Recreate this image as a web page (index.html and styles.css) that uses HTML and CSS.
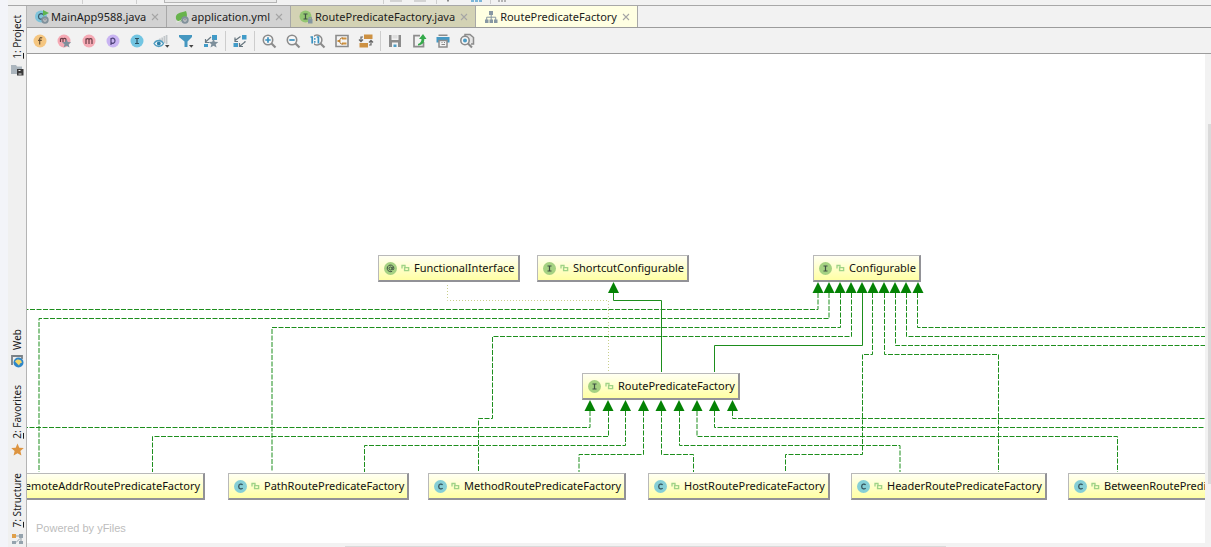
FILE: index.html
```html
<!DOCTYPE html>
<html lang="en">
<head>
<meta charset="utf-8">
<title>RoutePredicateFactory</title>
<link rel="stylesheet" href="styles.css">
</head>
<body>
<svg class="defs" aria-hidden="true">
  <symbol id="i-interface" viewBox="0 0 13 13"><circle cx="6.500" cy="6.500" r="6.500" fill="#a5d182"/><path d="M4.500 4h4M4.500 9h4M6.500 4v5" stroke="#3f5142" stroke-width="1.200" fill="none"/></symbol>
  <symbol id="i-class" viewBox="0 0 13 13"><circle cx="6.500" cy="6.500" r="6.500" fill="#85cfd6"/><path d="M8.600 4.800C7.600 3.600 4.700 3.700 4.700 6.500s2.900 2.900 3.900 1.700" stroke="#35545c" stroke-width="1.300" fill="none"/></symbol>
  <symbol id="i-annotation" viewBox="0 0 13 13"><circle cx="6.500" cy="6.500" r="6.500" fill="#a5d182"/><path d="M8.200 9.200A3.300 3.300 0 1 1 9.800 6.500c0 1.700-1.600 1.600-1.600.3V5M8 6.500a1.500 1.500 0 1 1-3 0a1.500 1.500 0 0 1 3 0" stroke="#3f5142" stroke-width="1" fill="none"/></symbol>
  <symbol id="i-lock" viewBox="0 0 9 8"><path d="M1 4.500V1.500h3V4" stroke="#9fd387" stroke-width="1.300" fill="none"/><path d="M3.600 3.600h4v3h-4z" stroke="#9fd387" stroke-width="1.400" fill="none"/></symbol>
  <symbol id="i-close" viewBox="0 0 8 8"><path d="M1 1l6 6M7 1L1 7" stroke="#a5a5a5" stroke-width="1.100"/></symbol>
</svg>

<div class="app">
  <div class="edge"></div>
  <div class="window">
    <div class="topbar">
      <i class="tick first"></i><i class="tick"></i><i class="combo"></i>
      <svg class="fragments" width="130" height="5" viewBox="0 0 130 5"><path d="M7 1h12M31 1h12" stroke="#b5b5b5"/><path d="M65 0v1.500" stroke="#8a8a8a" stroke-width="2"/><path d="M88 1h11" stroke="#55a3cf" stroke-width="1.500" stroke-dasharray="3 1"/><path d="M115 1h9" stroke="#777" stroke-dasharray="2 1"/><path d="M.500 0v4M53.500 0v4M107.500 0v4" stroke="#cfcfcf"/></svg>
    </div>
    <div class="body">
      <nav class="sidebar" aria-label="Tool windows">
        <button class="tool"><span class="tool-label"><u>1</u>: Project</span>
          <svg width="13" height="12" viewBox="0 0 13 12"><path d="M0 1h5l1 1.500h5V10H0z" fill="#abb5bd"/><path d="M6 5h6.500v6.500H6z" fill="#3b3b3b"/><path d="M7.500 6.500h2M7.500 10h3" stroke="#eee"/></svg></button>
        <button class="tool push"><span class="tool-label">Web</span>
          <svg width="13" height="13" viewBox="0 0 13 13"><path d="M1 10V1h10v3" fill="none" stroke="#7b8287" stroke-width="1.800"/><circle cx="7.500" cy="7.500" r="5" fill="#2e86c8"/><path d="M4 6.500c2-3 4-2 6-1l1 2-2 1-1 2-2-2z" fill="#f3d768"/></svg></button>
        <button class="tool"><span class="tool-label"><u>2</u>: Favorites</span>
          <svg width="13" height="13" viewBox="0 0 13 13"><path d="M6.500.500l1.800 4.200 4.500.4-3.400 3 1 4.400-3.900-2.300-3.900 2.300 1-4.400-3.400-3 4.500-.4z" fill="#dd9440"/></svg></button>
        <button class="tool"><span class="tool-label"><u>7</u>: Structure</span>
          <svg width="13" height="12" viewBox="0 0 13 12"><path d="M1 1h4v4H1z" fill="#e0a04a"/><path d="M8 1h4v4H8zM1 8h4v3H1zM8 8h4v3H8z" fill="#95a3ad"/><path d="M5 3h3M10 5v3M5 9.500l4-4" stroke="#95a3ad"/></svg></button>
      </nav>

      <main class="editor">
        <div class="tabs" role="tablist">
          <div class="tab"><svg width="15" height="14" viewBox="0 0 15 14"><circle cx="6" cy="6.500" r="6" fill="#7fc4da"/><path d="M8 4.500C6.500 3 3.500 3.500 3.500 6.500S6 9.500 7 8.800" stroke="#39596a" stroke-width="1.200" fill="none"/><path d="M8 0l6 3-6 3z" fill="#5fb550"/><circle cx="10" cy="10" r="2.700" stroke="#81919b" stroke-width="2" fill="#d2d2d2"/><path d="M10 8.500v2" stroke="#667"/></svg><span>MainApp9588.java</span><button aria-label="Close MainApp9588.java"><svg width="8" height="8"><use href="#i-close"/></svg></button></div>
          <div class="tab"><svg width="15" height="14" viewBox="0 0 15 14"><path d="M1 9C0 3 5 3 11 1c2 5 1 9-4 10-3 .5-5 0-6-2z" fill="#68b34d"/><path d="M1 12c3 0 6-2 8-5" stroke="#e8f3e0" stroke-width=".8" fill="none"/><circle cx="10" cy="10" r="2.700" stroke="#81919b" stroke-width="2" fill="#d2d2d2"/><path d="M10 8.500v2" stroke="#667"/></svg><span>application.yml</span><button aria-label="Close application.yml"><svg width="8" height="8"><use href="#i-close"/></svg></button></div>
          <div class="tab library"><svg width="15" height="14" viewBox="0 0 15 14"><circle cx="6.500" cy="6.500" r="6" fill="#93c672"/><path d="M4.500 4h4M4.500 9h4M6.500 4v5" stroke="#3f5142" stroke-width="1.200"/><path d="M9 9h4.500v4.500H9z" fill="#8496a1"/><path d="M10 9V7.500h2.500V9" stroke="#8496a1" fill="none"/></svg><span>RoutePredicateFactory.java</span><button aria-label="Close RoutePredicateFactory.java"><svg width="8" height="8"><use href="#i-close"/></svg></button></div>
          <div class="tab active"><svg width="15" height="14" viewBox="0 0 15 14"><path d="M5 1h4v4H5zM1 9.500h3.500V13H1zM5.500 9.500h3.500V13H5.500zM10 9.500h3.500V13H10z" fill="#8797a3"/><path d="M7.200 4v6M2.700 10V7.200h9V10" stroke="#8797a3" fill="none"/></svg><span>RoutePredicateFactory</span><button aria-label="Close RoutePredicateFactory"><svg width="8" height="8"><use href="#i-close"/></svg></button></div>
        </div>

        <div class="toolbar" role="toolbar">
          <div class="group">
            <button aria-label="Fields"><svg width="16" height="16" viewBox="0 0 16 16"><circle cx="8" cy="8" r="6.500" fill="#f5c680"/><path d="M10.200 5C8.500 4 7.700 4.800 7.700 6v5.500M6 7.300h3.800" stroke="#6b5334" stroke-width="1.200" fill="none"/></svg></button>
            <button class="wide" aria-label="Constructors"><svg width="17" height="16" viewBox="0 0 17 16"><circle cx="8" cy="8" r="6.500" fill="#f5a9b4"/><path d="M4.500 9V5.500M4.500 6c1-1 2.500-1 2.500.5V9M7 6c1-1 3-1 3 .5V9" stroke="#6c3f48" stroke-width="1.200" fill="none"/><path d="M10.500 6l1.300 3 3.400.2-2.600 2.100.9 3.300-3-1.900-2.900 1.900.9-3.300-2.600-2.100 3.300-.2z" fill="#7d8f9b"/></svg></button>
            <button aria-label="Methods"><svg width="16" height="16" viewBox="0 0 16 16"><circle cx="8" cy="8" r="6.500" fill="#f5a9b4"/><path d="M5 11V5.500M5 6.500c1-1.200 3-1.200 3 .5v4M8 6.500c1-1.200 3-1.200 3 .5v4" stroke="#6c3f48" stroke-width="1.200" fill="none"/></svg></button>
            <button aria-label="Properties"><svg width="16" height="16" viewBox="0 0 16 16"><circle cx="8" cy="8" r="6.500" fill="#c9b4f2"/><path d="M6 12V5M6 6c1.500-1.500 4-.8 4 1.700S7.500 11 6 9.500" stroke="#50447a" stroke-width="1.200" fill="none"/></svg></button>
            <button aria-label="Inner classes"><svg width="16" height="16" viewBox="0 0 16 16"><circle cx="8" cy="8" r="6.500" fill="#72c5e2"/><path d="M6 5.500h4M6 10.500h4M8 5.500v5" stroke="#2c5262" stroke-width="1.200"/></svg></button>
            <button class="wide" aria-label="Visibility level"><svg width="17" height="16" viewBox="0 0 17 16"><path d="M7 5.500v2M9.200 4.500v4M11.400 3v7M13.600 2v9" stroke="#c2c7ca" stroke-width="1.700"/><path d="M1 10.500c2.500-4 7-4 9.500 0-2.500 4-7 4-9.500 0z" fill="#eef5f8" stroke="#4f9cc0" stroke-width="1.300"/><circle cx="5.800" cy="10.500" r="1.900" fill="#2d7ea8"/><path d="M12 12h4.500l-2.200 2.800z" fill="#444"/></svg></button>
            <button class="wide" aria-label="Filter"><svg width="17" height="16" viewBox="0 0 17 16"><path d="M1 2h13v2L9.500 8.500V14h-3V8.500L1 4z" fill="#4597c0"/><path d="M11 12h4.500l-2.200 2.800z" fill="#444"/></svg></button>
            <button aria-label="Show neighbours"><svg width="16" height="16" viewBox="0 0 16 16"><path d="M9 2h5v5H9z" fill="#419bc8"/><path d="M1 11h4v3H1z" fill="#419bc8"/><path d="M8 4L2.500 9M2.500 6v3.500H6" stroke="#6b7a83" stroke-width="1.200" fill="none"/><path d="M10.500 5.500l1.300 3.200 3.500.3-2.600 2.200.9 3.400-3.100-1.900-3 1.900.9-3.400-2.700-2.200 3.500-.3z" fill="#7d8f9b"/></svg></button>
          </div>
          <i class="sep"></i>
          <div class="group">
            <button aria-label="Route edges"><svg width="16" height="16" viewBox="0 0 16 16"><path d="M10 2h4.500v4.500H10zM1.500 10H6v4H1.500z" fill="#419bc8"/><path d="M8.500 3.500l-5.500 4M3 4.500v4h3M13 8v1l-5 4M7.500 10v3.500H11" stroke="#66757e" stroke-width="1.200" fill="none"/></svg></button>
          </div>
          <i class="sep"></i>
          <div class="group">
            <button aria-label="Zoom in"><svg width="16" height="16" viewBox="0 0 16 16"><circle cx="7" cy="7" r="4.700" stroke="#8b8b8b" stroke-width="1.600" fill="#f7f7f7"/><path d="M10.500 10.500l4 4" stroke="#8b8b8b" stroke-width="2.200"/><path d="M4.300 7h5.400M7 4.300v5.400" stroke="#3c92c0" stroke-width="1.700"/></svg></button>
            <button aria-label="Zoom out"><svg width="16" height="16" viewBox="0 0 16 16"><circle cx="7" cy="7" r="4.700" stroke="#8b8b8b" stroke-width="1.600" fill="#f7f7f7"/><path d="M10.500 10.500l4 4" stroke="#8b8b8b" stroke-width="2.200"/><path d="M4.300 7h5.400" stroke="#3c92c0" stroke-width="1.700"/></svg></button>
            <button class="wide" aria-label="Actual size"><svg width="17" height="16" viewBox="0 0 17 16"><circle cx="8" cy="7" r="4.900" stroke="#8b8b8b" stroke-width="1.500" fill="#f7f7f7"/><path d="M1 2h4v10H1z" fill="#f2f2f2"/><path d="M11.500 10.500l4 4" stroke="#8b8b8b" stroke-width="2.200"/><path d="M1.500 4h1.700v6.500M7.700 4h1.700v6.500" stroke="#3c92c0" stroke-width="1.700" fill="none"/><path d="M5.800 5v1.700M5.800 8v1.700" stroke="#3c92c0" stroke-width="1.400"/></svg></button>
            <button aria-label="Fit content"><svg width="16" height="16" viewBox="0 0 16 16"><path d="M2 2.500h12v11H2z" stroke="#8b8b8b" stroke-width="1.600" fill="#f4f4f4"/><path d="M8 5.500h4.500M8 10.500h4.500M3.500 8h3" stroke="#d0923f" stroke-width="2"/><path d="M9 5H7L5 8l2 3h2" stroke="#b07a35" fill="none"/></svg></button>
            <button aria-label="Apply layout"><svg width="16" height="16" viewBox="0 0 16 16"><path d="M6 1.500h8.500V6H6zM1.500 10H10v4.500H1.500z" fill="#cd9143"/><path d="M5 4H3v4.500M1 6.500l2 2.200 2-2.200M11 12h2V7.500M11 9.500l2-2.200 2 2.200" stroke="#666" stroke-width="1.200" fill="none"/></svg></button>
          </div>
          <i class="sep"></i>
          <div class="group">
            <button aria-label="Save"><svg width="16" height="16" viewBox="0 0 16 16"><path d="M2 2h2.500v5h7V2H14v12H2z" fill="#8c8c8c"/><path d="M5.500 2h5v3.500h-5z" fill="#dedede"/><path d="M5 9.500h6V14H5z" fill="#f3f3f3"/><path d="M6.500 11.500h3V14h-3z" fill="#4a9bc4"/></svg></button>
            <button aria-label="Export"><svg width="16" height="16" viewBox="0 0 16 16"><path d="M9 2.700H3v11h9.500V9" stroke="#8c8c8c" stroke-width="1.700" fill="none"/><path d="M7 11c2.500-1 3.500-2.500 3.500-5H8l4-5 3.500 5h-2.200c0 4-2 6-6.300 6.500z" fill="#35aa4b"/></svg></button>
            <button aria-label="Print"><svg width="16" height="16" viewBox="0 0 16 16"><path d="M3.500 1.500h9V3h-9z" fill="#8c8c8c"/><path d="M1.500 4h13v5.500h-13z" fill="#4599c4"/><path d="M4 7.500h8V14H4z" fill="#f3f3f3" stroke="#8c8c8c" stroke-width="1.500"/><path d="M6.500 9.500h1M9 9.500h1M6.500 11.500H10" stroke="#888"/></svg></button>
            <button aria-label="Print preview"><svg width="16" height="16" viewBox="0 0 16 16"><path d="M6 3V1.500h5l3.500 3V11H12" stroke="#8b8b8b" stroke-width="1.500" fill="#e5e5e5"/><circle cx="6" cy="7.500" r="4.200" stroke="#8b8b8b" stroke-width="1.600" fill="#f7f7f7"/><circle cx="6" cy="7.500" r="2" fill="#4b9bc4"/><path d="M9 10.500l4 4" stroke="#8b8b8b" stroke-width="2.200"/></svg></button>
          </div>
        </div>

        <div class="view">
          <div class="canvas">
            <svg class="edges" width="100%" height="100%" aria-hidden="true">
              <defs><path id="head" d="M0 0L5.500 11h-11z" fill="#048204"/></defs>
              <g transform="translate(-27 -54)" fill="none" stroke="#1d8e1d">
                <g stroke-dasharray="5 1.500" stroke-width="1">
                  <path d="M818 293V309.500H27"/>
                  <path d="M829 293V318.500H39V472"/>
                  <path d="M840.500 293V327.500H272V472"/>
                  <path d="M851.500 293V336.500H492.500V418.500H478.500V472"/>
                  <path d="M872.500 293V354.500H862.500V454.500H785.500V472"/>
                  <path d="M884.500 293V354.500H998.500V472"/>
                  <path d="M895.500 293V345.500H3000"/>
                  <path d="M906.500 293V336.500H3000"/>
                  <path d="M917.500 293V327.500H3000"/>
                  <path d="M590 411V427.500H27"/>
                  <path d="M608.500 411V436.500H152.500V472"/>
                  <path d="M625.500 411V445.500H364.500V472"/>
                  <path d="M643.500 411V454.500H579V472"/>
                  <path d="M661.500 411V454.500H693.500V472"/>
                  <path d="M679.500 411V445.500H900V472"/>
                  <path d="M697 411V436.500H1117.500V472"/>
                  <path d="M714.500 411V427.500H3000"/>
                  <path d="M732.500 411V418.500H3000"/>
                </g>
                <path d="M613.500 293V300.500H661.500V372M862.500 293V345.500H714.500V372"/>
                <path d="M447.500 285V300.500H608.500V372" stroke="#c9cf8c" stroke-dasharray="1 2"/>
              </g>
              <g transform="translate(-27 -54)">
                <use href="#head" x="613.500" y="282"/>
                <use href="#head" x="818" y="282"/><use href="#head" x="829" y="282"/><use href="#head" x="840" y="282"/><use href="#head" x="851" y="282"/><use href="#head" x="862" y="282"/><use href="#head" x="873" y="282"/><use href="#head" x="884" y="282"/><use href="#head" x="895" y="282"/><use href="#head" x="906" y="282"/><use href="#head" x="918" y="282"/>
                <use href="#head" x="590" y="400"/><use href="#head" x="608" y="400"/><use href="#head" x="625.500" y="400"/><use href="#head" x="643.500" y="400"/><use href="#head" x="661" y="400"/><use href="#head" x="679" y="400"/><use href="#head" x="697" y="400"/><use href="#head" x="714.500" y="400"/><use href="#head" x="732.500" y="400"/>
              </g>
            </svg>
            <div class="node functional"><svg width="13" height="13"><use href="#i-annotation"/></svg><svg class="lock" width="9" height="8"><use href="#i-lock"/></svg><span>FunctionalInterface</span></div>
            <div class="node shortcut"><svg width="13" height="13"><use href="#i-interface"/></svg><svg class="lock" width="9" height="8"><use href="#i-lock"/></svg><span>ShortcutConfigurable</span></div>
            <div class="node configurable"><svg width="13" height="13"><use href="#i-interface"/></svg><svg class="lock" width="9" height="8"><use href="#i-lock"/></svg><span>Configurable</span></div>
            <div class="node route"><svg width="13" height="13"><use href="#i-interface"/></svg><svg class="lock" width="9" height="8"><use href="#i-lock"/></svg><span>RoutePredicateFactory</span></div>
            <div class="node remote"><svg width="13" height="13"><use href="#i-class"/></svg><svg class="lock" width="9" height="8"><use href="#i-lock"/></svg><span>RemoteAddrRoutePredicateFactory</span></div>
            <div class="node path"><svg width="13" height="13"><use href="#i-class"/></svg><svg class="lock" width="9" height="8"><use href="#i-lock"/></svg><span>PathRoutePredicateFactory</span></div>
            <div class="node method"><svg width="13" height="13"><use href="#i-class"/></svg><svg class="lock" width="9" height="8"><use href="#i-lock"/></svg><span>MethodRoutePredicateFactory</span></div>
            <div class="node host"><svg width="13" height="13"><use href="#i-class"/></svg><svg class="lock" width="9" height="8"><use href="#i-lock"/></svg><span>HostRoutePredicateFactory</span></div>
            <div class="node header"><svg width="13" height="13"><use href="#i-class"/></svg><svg class="lock" width="9" height="8"><use href="#i-lock"/></svg><span>HeaderRoutePredicateFactory</span></div>
            <div class="node between"><svg width="13" height="13"><use href="#i-class"/></svg><svg class="lock" width="9" height="8"><use href="#i-lock"/></svg><span>BetweenRoutePredicateFactory</span></div>
            <div class="credit">Powered by yFiles</div>
          </div>
          <div class="vscroll"><i></i></div>
          <div class="hscroll"><i></i></div>
        </div>
      </main>
    </div>
  </div>
</div>
</body>
</html>
```

FILE: styles.css
```css
* { box-sizing: border-box; }
body { margin: 0; font: 11px/16px "Noto Sans", "Open Sans", sans-serif; color: #1c1c1c; background: #f2f2f2; }
button { border: 0; padding: 0; background: none; font: inherit; color: inherit; display: flex; }
svg { display: block; flex: none; }
.defs { position: absolute; width: 0; height: 0; }

.app { display: flex; height: 100vh; overflow: hidden; }
.edge { width: 8px; background: #f3f4f9; }
.window { flex: 1; min-width: 0; display: flex; flex-direction: column; }
.topbar { height: 6px; display: flex; align-items: flex-start; border-bottom: 1px solid #a8a8a8; background: #f2f2f2; }
.tick { width: 1px; height: 4px; background: #cfcfcf; margin-right: 53px; }
.tick.first { margin-left: 74px; }
.tick + .combo { margin-left: -26px; }
.combo { width: 113px; height: 3px; border: 1px solid #b5b5b5; border-top: 0; background: #ececec; }
.fragments { margin-left: 106px; }

.body { flex: 1; min-height: 0; display: flex; }
.sidebar { width: 19px; display: flex; flex-direction: column; gap: 17px; padding: 9px 0 2px; border-right: 1px solid #b4b4b4; background: #f0f0f0; }
.tool { flex-direction: column; align-items: center; gap: 5px; }
.push { margin-top: auto; }
.tool-label { writing-mode: vertical-rl; transform: rotate(180deg); font-size: 10px; line-height: 14px; white-space: nowrap; }

.editor { flex: 1; min-width: 0; display: flex; flex-direction: column; }
.tabs { height: 22px; display: flex; border-bottom: 1px solid #9c9c9c; background: #f2f2f2; }
.tab { display: flex; align-items: center; padding: 0 7px 0 8px; border-right: 1px solid #a8a8a8; background: #d2d2d2; white-space: nowrap; }
.tab span { margin: 0 5px 0 1px; }
.tab.library { background: #d3d2b4; }
.tab.active { background: #ffffe2; }
.toolbar { height: 26px; display: flex; align-items: center; padding-left: 5px; border-bottom: 1px solid #9c9c9c; background: #f2f2f2; }
.group { display: flex; gap: 8px; }
.group button { width: 16px; }
.group .wide { width: 17px; }
.sep { width: 1px; height: 20px; margin: 0 6px; background: #cdcdcd; }

.view { flex: 1; min-height: 0; display: grid; grid-template: 1fr 4px / 1fr 6px; }
.canvas { position: relative; overflow: hidden; background: #fff; }
.edges { position: absolute; inset: 0; }
.node { position: absolute; display: flex; align-items: center; height: 27px; padding: 0 3px 0 5px; border: solid; border-width: 1px 2px 2px 1px; border-color: #b9b9b9 #929297 #929297 #b9b9b9; background: linear-gradient(#fffff2, #ffffa4); white-space: nowrap; color: #111; }
.lock { margin: 0 4px; }
.functional { left: 351px; top: 201px; }
.shortcut { left: 510px; top: 201px; }
.configurable { left: 786px; top: 201px; }
.route { left: 555px; top: 319px; }
.remote { left: -45px; top: 419px; }
.path { left: 201px; top: 419px; }
.method { left: 401px; top: 419px; }
.host { left: 621px; top: 419px; }
.header { left: 824px; top: 419px; }
.between { left: 1041px; top: 419px; }
.credit { position: absolute; left: 9px; bottom: 7px; font-family: "Liberation Sans", Arial, sans-serif; font-size: 11px; color: #bdbdbd; }
.vscroll { display: flex; flex-direction: column; align-items: flex-end; padding-top: 70px; background: #f2f2f2; }
.vscroll i { width: 3px; height: 86%; background: #dadada; }
.hscroll { display: flex; align-items: flex-end; background: #f2f2f2; }
.hscroll i { width: 51%; height: 1px; margin-left: 27%; background: #dadada; }
```
